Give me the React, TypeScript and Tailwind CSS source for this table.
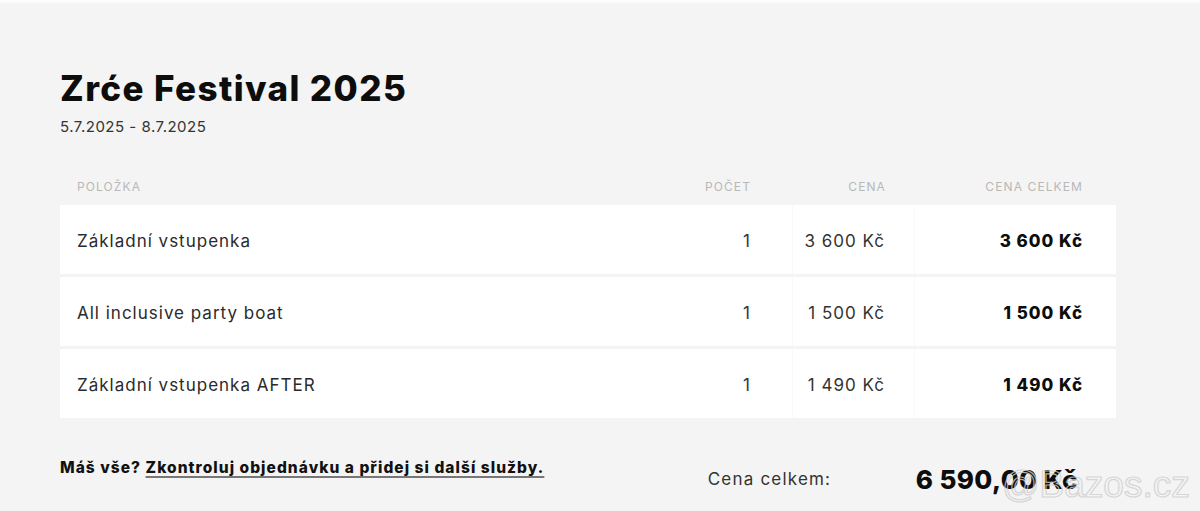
const items = [
  { name: "Základní vstupenka", qty: 1, price: "3 600 Kč", total: "3 600 Kč" },
  { name: "All inclusive party boat", qty: 1, price: "1 500 Kč", total: "1 500 Kč" },
  { name: "Základní vstupenka AFTER", qty: 1, price: "1 490 Kč", total: "1 490 Kč" },
];

export default function App() {
  return (
    <div className="relative w-full h-[511px] overflow-hidden bg-[#f4f4f4] font-['Inter','Liberation_Sans',sans-serif] text-[#222]">
      {/* faint top edge */}
      <div className="h-[4px] bg-gradient-to-b from-white to-[#f4f4f4]" />

      <div className="px-[60px] pt-[62px]">
        <h1 className="text-[35px] leading-[44px] font-extrabold tracking-[1.4px] text-[#0d0d0d]">
          Zrće Festival 2025
        </h1>
        <div className="mt-[7px] text-[15px] leading-[20px] tracking-[0.5px] text-[#333]">5.7.2025 - 8.7.2025</div>

        {/* table */}
        <div className="mt-[32px] w-[1056px]">
          <div className="flex h-[36px] items-center text-[12px] uppercase text-[#b8b8b8] tracking-[1.1px]">
            <div className="flex-1 pl-[17px]">Položka</div>
            <div className="w-[100px] pr-[41px] text-right">Počet</div>
            <div className="w-[123px] pr-[29px] text-right">Cena</div>
            <div className="w-[201px] pr-[33px] text-right">Cena celkem</div>
          </div>

          <div className="flex flex-col gap-[3px]">
            {items.map((it) => (
              <div key={it.name} className="flex h-[69px] items-stretch bg-white pt-[4px] text-[17px] tracking-[1px]">
                <div className="flex flex-1 items-center pl-[17px] text-[#2a2a2a]">{it.name}</div>
                <div className="flex w-[100px] items-center justify-end pr-[41px] text-[#333]">{it.qty}</div>
                <div className="-mt-[4px] flex w-[123px] items-center justify-end border-x border-[#f9f9f9] pt-[4px] pr-[29px] text-[#333]">
                  {it.price}
                </div>
                <div className="flex w-[201px] items-center justify-end pr-[33px] font-extrabold text-[#0d0d0d]">
                  {it.total}
                </div>
              </div>
            ))}
          </div>
        </div>

        {/* footer */}
        <div className="mt-[34px] flex w-[1056px] items-start">
          <div className="flex-1 pt-[4px] text-[15.5px] font-extrabold tracking-[1.05px] text-[#111]">
            Máš vše?{" "}
            <a href="#" className="underline decoration-[#777] decoration-2 underline-offset-[3px]">
              Zkontroluj objednávku a přidej si další služby.
            </a>
          </div>
          <div className="flex items-center pt-[8px]">
            <span className="w-[208px] text-[17px] tracking-[1.2px] text-[#333]">Cena celkem:</span>
            <span className="pr-[38px] text-[26px] font-extrabold tracking-[0.4px] text-[#0d0d0d]">6 590,00 Kč</span>
          </div>
        </div>
      </div>

      {/* watermark */}
      <span className="absolute left-[1002px] top-[457px] font-['Liberation_Sans',sans-serif] text-[37px] text-transparent [-webkit-text-stroke:1.2px_#cfcfcf] opacity-80">
        @Bazos.cz
      </span>
    </div>
  );
}
